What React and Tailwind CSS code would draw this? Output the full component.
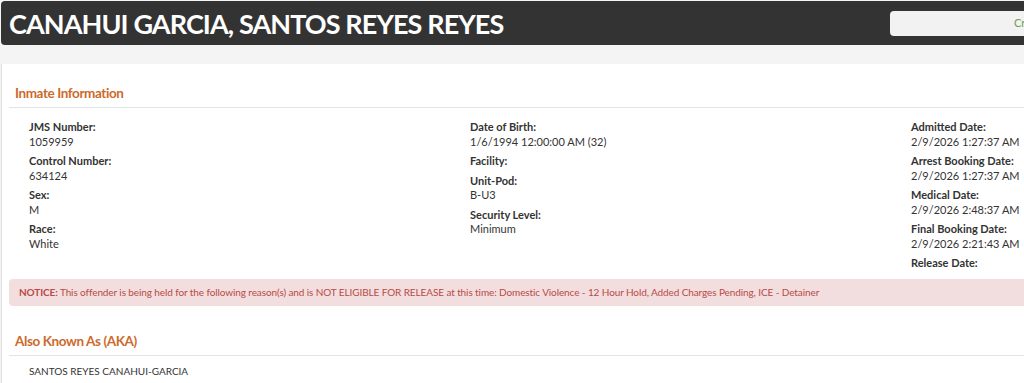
import React from 'react';

const left = [
  { label: 'JMS Number:', value: '1059959' },
  { label: 'Control Number:', value: '634124' },
  { label: 'Sex:', value: 'M' },
  { label: 'Race:', value: 'White' },
];

const middle = [
  { label: 'Date of Birth:', value: '1/6/1994 12:00:00 AM (32)' },
  { label: 'Facility:', value: '' },
  { label: 'Unit-Pod:', value: 'B-U3' },
  { label: 'Security Level:', value: 'Minimum' },
];

const right = [
  { label: 'Admitted Date:', value: '2/9/2026 1:27:37 AM' },
  { label: 'Arrest Booking Date:', value: '2/9/2026 1:27:37 AM' },
  { label: 'Medical Date:', value: '2/9/2026 2:48:37 AM' },
  { label: 'Final Booking Date:', value: '2/9/2026 2:21:43 AM' },
  { label: 'Release Date:', value: '' },
];

const Field = ({ label, value }) => (
  <div className="mb-[5px] text-[11px] leading-[14.5px] text-[#333]">
    <div className="font-bold">{label}</div>
    {value && <div>{value}</div>}
  </div>
);

const SectionTitle = ({ children }) => (
  <div className="border-b border-[#e3e3e3] pb-[5px] pl-[6px]">
    <h2 className="text-[13.5px] font-bold leading-[18px] tracking-[-0.4px] text-[#cd6a2b]">{children}</h2>
  </div>
);

export default function App() {
  return (
    <div className="w-[1024px] h-[383px] overflow-hidden bg-[#f4f4f4] font-['Lato',sans-serif]">
      <div className="w-[1400px]">
        {/* header bar */}
        <div className="mx-px mt-px h-[44px] rounded bg-[#333333] grid grid-cols-[889px_1fr] items-center">
          <h1 className="pl-2 text-[27px] font-bold leading-none tracking-[-0.9px] text-white">
            CANAHUI GARCIA, SANTOS REYES REYES
          </h1>
          <div className="h-[25px] w-[320px] rounded bg-[#f2f2f2] flex items-center pl-[124px]">
            <span className="text-[11px] text-[#6f9e4f]">Create Alert</span>
          </div>
        </div>

        {/* panel */}
        <div className="mt-[19px] ml-px bg-white border-l border-[#e0e0e0] pt-5 pl-[7px] pb-8">
          <SectionTitle>Inmate Information</SectionTitle>

          <div className="grid grid-cols-[441px_441px_441px] pl-5 pt-3">
            <div>{left.map(f => <Field key={f.label} {...f} />)}</div>
            <div>{middle.map(f => <Field key={f.label} {...f} />)}</div>
            <div>{right.map(f => <Field key={f.label} {...f} />)}</div>
          </div>

          <div className="mt-[3px] h-[27px] rounded bg-[#f2dede] flex items-center pl-[10px] text-[10px] tracking-[-0.1px] text-[#b94a48]">
            <span className="font-bold">NOTICE:</span>
            <span>&nbsp;This offender is being held for the following reason(s) and is NOT ELIGIBLE FOR RELEASE at this time: Domestic Violence - 12 Hour Hold, Added Charges Pending, ICE - Detainer</span>
          </div>

          <div className="mt-[26px]">
            <SectionTitle>Also Known As (AKA)</SectionTitle>
            <div className="pl-[20px] pt-[9px] text-[10px] leading-[1.2] text-[#333]">
              SANTOS REYES CANAHUI-GARCIA
            </div>
          </div>
        </div>
      </div>
    </div>
  );
}
